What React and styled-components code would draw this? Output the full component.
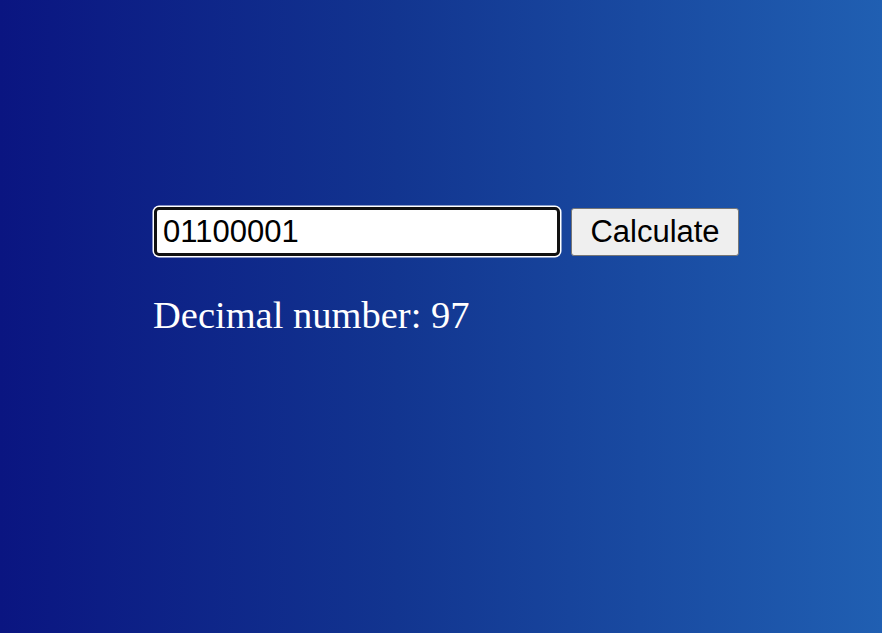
import React, { useState } from 'react';
import styled, { createGlobalStyle } from 'styled-components';

const Global = createGlobalStyle`
  html, body {
    margin: 0;
    padding: 0;
    height: 100%;
  }
  #root {
    height: 100%;
  }
`;

const Page = styled.div`
  box-sizing: border-box;
  height: 100%;
  min-height: 633px;
  padding: 207px 0 0 154px;
  background: linear-gradient(to right, #0a1581 0%, #123590 45%, #205fb2 100%);
  font-family: "Liberation Serif", "Times New Roman", serif;
`;

const Form = styled.div`
  display: flex;
  align-items: center;
  gap: 11px;
`;

const Input = styled.input`
  box-sizing: border-box;
  width: 406px;
  height: 49px;
  margin: 0;
  padding: 0 6px;
  border: 3px solid #111;
  border-radius: 5px;
  outline: none;
  box-shadow: 0 0 0 1.5px #fff;
  background: #fff;
  color: #000;
  font-family: "Liberation Sans", Arial, sans-serif;
  font-size: 31px;
`;

const Button = styled.button`
  box-sizing: border-box;
  width: 168px;
  height: 48px;
  margin: 0;
  padding: 0;
  border: 1px solid #767676;
  border-radius: 3px;
  background: #efefef;
  color: #000;
  font-family: "Liberation Sans", Arial, sans-serif;
  font-size: 31px;
`;

const Result = styled.p`
  margin: 37px 0 0 -1px;
  color: #fff;
  font-size: 38.5px;
  line-height: normal;
`;

export default function App() {
  const [value, setValue] = useState('01100001');
  const [result, setResult] = useState(97);

  const calc = () => setResult(parseInt(value, 2));

  return (
    <Page>
      <Global />
      <Form>
        <Input value={value} onChange={e => setValue(e.target.value)} />
        <Button onClick={calc}>Calculate</Button>
      </Form>
      <Result>Decimal number: {result}</Result>
    </Page>
  );
}
